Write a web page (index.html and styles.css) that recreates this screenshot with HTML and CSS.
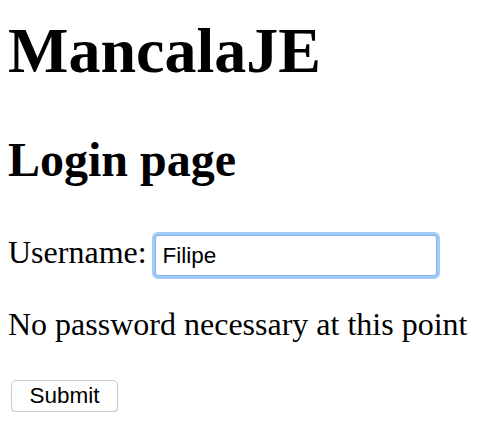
FILE: index.html
```html
<!DOCTYPE html>
<html>
<head>
<meta charset="utf-8">
<link rel="stylesheet" href="styles.css">
</head>
<body>
<h1 class="title">MancalaJE</h1>
<h2 class="subtitle">Login page</h2>
<form class="login">
  <div class="row">
    <label class="label" for="u">Username:</label>
    <input class="field" id="u" type="text" value="Filipe">
  </div>
  <p class="note">No password necessary at this point</p>
  <button class="submit" type="button">Submit</button>
</form>
</body>
</html>
```
FILE: styles.css
```css
html, body { background: #fff; }
body {
  margin: 8px;
  font-family: "Liberation Serif", "Times New Roman", serif;
  color: #000;
}
.title {
  font-size: 64px;
  font-weight: bold;
  line-height: 74px;
  margin: 6px 0 0 0;
}
.subtitle {
  font-size: 48px;
  font-weight: bold;
  line-height: 54px;
  margin: 45px 0 0 0;
}
.login { margin-top: 46px; }
.row {
  display: flex;
  align-items: flex-start;
  font-size: 32px;
  height: 45px;
}
.label {
  line-height: 45px;
  margin-top: -3px;
}
.field {
  box-sizing: border-box;
  width: 282px;
  height: 41px;
  margin: 2px 0 0 8px;
  border: 1px solid #7faee8;
  border-radius: 3px;
  padding: 0 7px;
  font-family: "Liberation Sans", Arial, sans-serif;
  font-size: 22.5px;
  color: #000;
  outline: none;
  box-shadow: 0 0 0 3px #a2ccf8;
}
.note {
  font-size: 32px;
  margin: 28px 0 0 0;
  line-height: 36px;
}
.submit {
  display: block;
  margin: 38px 0 0 3px;
  width: 107px;
  height: 32px;
  background: #fff;
  border: 1px solid #cacaca;
  border-radius: 5px;
  box-shadow: 0 1px 1px rgba(0,0,0,0.15);
  font-family: "Liberation Sans", Arial, sans-serif;
  font-size: 22.5px;
  color: #000;
  padding: 0;
}
```
